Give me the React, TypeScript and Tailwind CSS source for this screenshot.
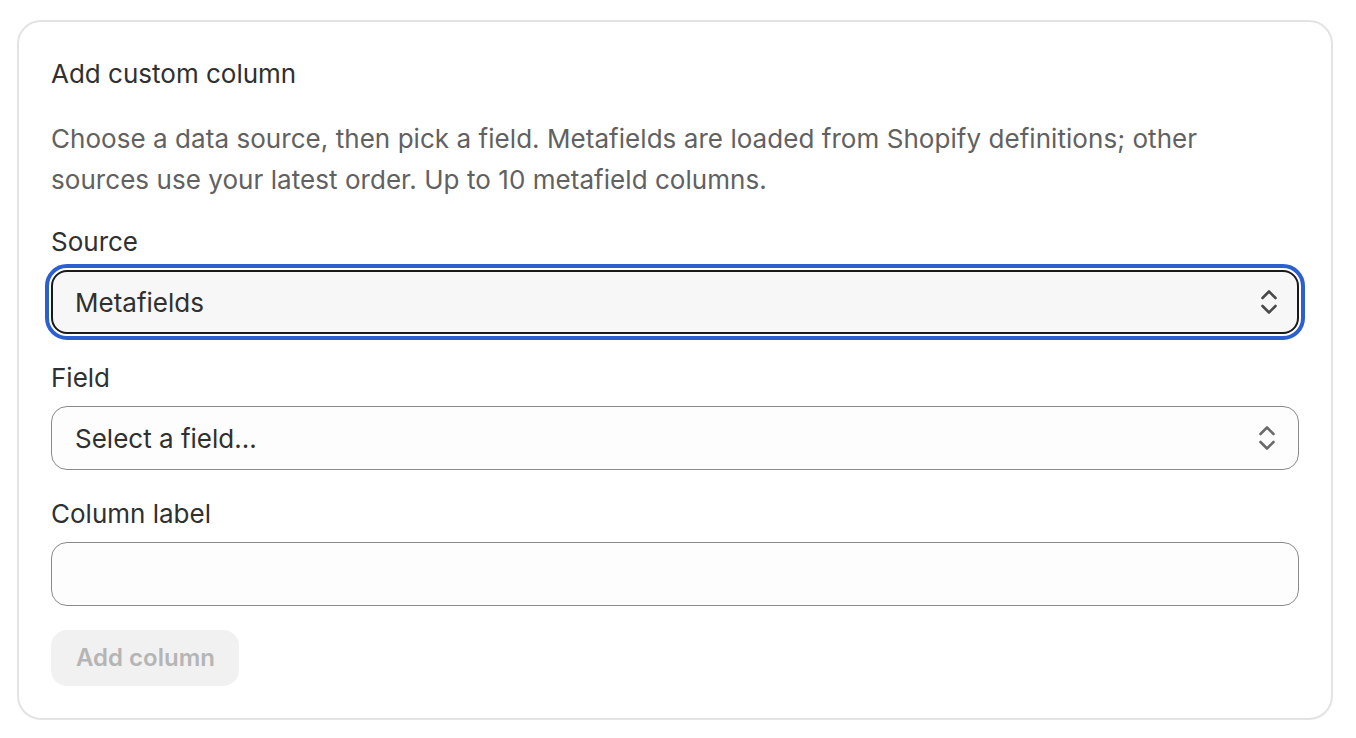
import { useState } from 'react';

function SelectChevron({ color }: { color: string }) {
  return (
    <svg width="16" height="24" viewBox="0 0 16 24" fill="none" className="shrink-0">
      <polyline points="1.5,8 8,1.5 14.5,8" stroke={color} strokeWidth="2.6" strokeLinecap="round" strokeLinejoin="round" />
      <polyline points="1.5,16 8,22.5 14.5,16" stroke={color} strokeWidth="2.6" strokeLinecap="round" strokeLinejoin="round" />
    </svg>
  );
}

export default function App() {
  const [label, setLabel] = useState('');

  return (
    <div
      className="min-h-screen bg-white pt-[20px] pl-[17px]"
      style={{ fontFamily: 'Inter, "Noto Sans", sans-serif' }}
    >
      <div className="w-[1316px] rounded-[24px] border-2 border-[#e3e3e3] bg-white p-8 flex flex-col">
        {/* heading */}
        <h2 className="text-[26px] leading-[40px] text-[#303030] font-normal">Add custom column</h2>

        <p className="mt-6 text-[26px] leading-[41px] tracking-[0.05px] text-[#616161] pr-[80px]">
          Choose a data source, then pick a field. Metafields are loaded from Shopify definitions; other
          sources use your latest order. Up to 10 metafield columns.
        </p>

        {/* source */}
        <label className="mt-[22px] text-[26px] leading-[40px] text-[#303030]">Source</label>
        <div className="mt-2 h-[64px] rounded-[16px] border-2 border-[#1a1a1a] bg-[#f7f7f7] outline-4 outline-[#2c5fd0] outline-offset-2 flex items-center justify-between pl-[22px] pr-[20px]">
          <span className="text-[26px] text-[#303030]">Metafields</span>
          <SelectChevron color="#4a4a4a" />
        </div>

        {/* field */}
        <label className="mt-6 text-[26px] leading-[40px] text-[#303030]">Field</label>
        <div className="mt-2 h-[64px] rounded-[16px] border-[1.5px] border-[#8a8a8a] bg-[#fdfdfd] flex items-center justify-between pl-[23px] pr-[23px]">
          <span className="text-[26px] text-[#303030]">Select a field...</span>
          <SelectChevron color="#6b6b6b" />
        </div>

        {/* column label */}
        <label className="mt-6 text-[26px] leading-[40px] text-[#303030]">Column label</label>
        <input
          value={label}
          onChange={(e) => setLabel(e.target.value)}
          className="mt-2 h-[64px] rounded-[16px] border-[1.5px] border-[#8a8a8a] bg-[#fdfdfd] px-6 text-[26px] text-[#303030] outline-none"
        />

        <div className="mt-6">
          <button
            disabled
            className="h-[56px] rounded-[16px] bg-[#f1f1f1] pl-[25px] pr-6 text-[24px] font-semibold text-[#b5b5b5]"
          >
            Add column
          </button>
        </div>
      </div>
    </div>
  );
}
